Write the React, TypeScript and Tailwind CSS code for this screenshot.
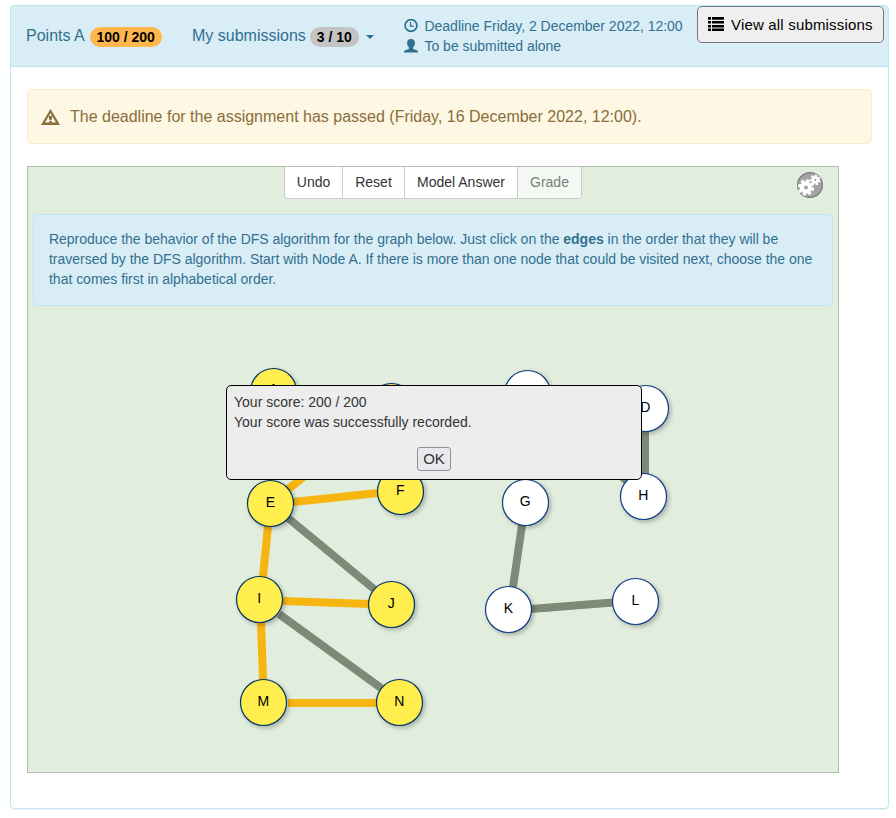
type GraphNode = { id: string; x: number; y: number; visited?: boolean; labelY?: number };

const nodes: GraphNode[] = [
  { id: "A", x: 273.5, y: 391.5, visited: true, labelY: 394 },
  { id: "B", x: 391.5, y: 406.5, visited: true },
  { id: "C", x: 527.5, y: 393.5 },
  { id: "D", x: 645.5, y: 408.5 },
  { id: "E", x: 270.5, y: 503.5, visited: true },
  { id: "F", x: 400.5, y: 491.5, visited: true },
  { id: "G", x: 525.5, y: 502.5 },
  { id: "H", x: 643.5, y: 496.5 },
  { id: "I", x: 259.5, y: 599.5, visited: true },
  { id: "J", x: 391.5, y: 604.5, visited: true },
  { id: "K", x: 508.5, y: 609.5 },
  { id: "L", x: 635.5, y: 601.5 },
  { id: "M", x: 263.5, y: 702.5, visited: true },
  { id: "N", x: 399.5, y: 702.5, visited: true },
];

type Edge = { from: [number, number]; to: [number, number]; visited?: boolean };

const edges: Edge[] = [
  { from: [287, 490], to: [374, 421], visited: true },
  { from: [293, 502], to: [378, 493], visited: true },
  { from: [268, 526], to: [263, 577], visited: true },
  { from: [282, 601], to: [369, 604], visited: true },
  { from: [261, 622], to: [263, 680], visited: true },
  { from: [288, 703], to: [377, 703], visited: true },
  { from: [288, 518], to: [374, 589] },
  { from: [279, 614], to: [381, 688] },
  { from: [522, 525], to: [513, 587] },
  { from: [531, 609], to: [613, 602.5] },
  { from: [645, 431], to: [645, 474] },
  { from: [547, 409], to: [629, 483] },
];

function ClockIcon() {
  return (
    <svg className="h-[14px] w-[14px]" viewBox="0 0 14 14" fill="none" stroke="currentColor">
      <circle cx="7" cy="6.500" r="5.900" strokeWidth="1.700" />
      <path d="M6.500 3v4.100h3.300" strokeWidth="1.200" />
    </svg>
  );
}

function UserIcon() {
  return (
    <svg className="h-[14px] w-[14px]" viewBox="0 0 14 14" fill="currentColor">
      <path d="M7 0C4.500 0 3.100 1.500 3.100 3.900c0 1.900.8 3.600 1.900 4.600v1c-.2.500-1 .8-2.400 1.200C1 11.200 0 11.700 0 12.600V13.500h14v-.9c0-.9-1-1.400-2.600-1.900C10 10.300 9.200 10 9 9.500v-1c1.100-1 1.900-2.700 1.900-4.600C10.900 1.500 9.500 0 7 0z" />
    </svg>
  );
}

function WarningIcon() {
  return (
    <svg className="h-4 w-[19px] shrink-0" viewBox="0 0 19 16">
      <path fill="currentColor" fillRule="evenodd" d="M9.500 0L19 16H0zM9.500 4L4 13.400h11z" />
      <path fill="currentColor" d="M7.500 6.700h4l-1 4.500h-2zM8.300 12h2.400v1.800H8.300z" />
    </svg>
  );
}

function ListIcon() {
  return (
    <svg className="h-[14px] w-4 shrink-0" viewBox="0 0 16 14" fill="currentColor">
      <path d="M0 0h3v2.700H0zM4 0h12v2.700H4zM0 4h3v2.500H0zM4 4h12v2.500H4zM0 8h3v2.500H0zM4 8h12v2.500H4zM0 11.600h3V14H0zM4 11.600h12V14H4z" />
    </svg>
  );
}

function SettingsIcon() {
  return (
    <svg className="h-[26px] w-[26px]" viewBox="0 0 26 26">
      <circle cx="13" cy="13" r="12.400" fill="#a3a3a3" stroke="#7b7b7b" strokeWidth="1.200" />
      <circle cx="9" cy="15.500" r="6.200" fill="#fff" />
      <circle cx="9" cy="15.500" r="6.700" fill="none" stroke="#fff" strokeWidth="3" strokeDasharray="3.200 2.062" />
      <circle cx="9" cy="15.500" r="1.900" fill="#a3a3a3" />
      <circle cx="18.300" cy="7.900" r="3.700" fill="#fff" />
      <circle cx="18.300" cy="7.900" r="4.200" fill="none" stroke="#fff" strokeWidth="2.200" strokeDasharray="2.400 1.370" />
      <circle cx="18.300" cy="7.900" r="1.100" fill="#a3a3a3" />
    </svg>
  );
}

function Graph() {
  return (
    <svg className="absolute inset-0 h-full w-full" viewBox="28 167 810 605">
      {edges.map((e, i) => (
        <line
          key={i}
          x1={e.from[0]}
          y1={e.from[1]}
          x2={e.to[0]}
          y2={e.to[1]}
          strokeWidth="8"
          stroke={e.visited ? "#f7b512" : "#7e8978"}
        />
      ))}
      {nodes.map((n) => (
        <g key={n.id}>
          <circle
            className="drop-shadow-[2px_2px_2px_rgba(0,0,0,0.25)]"
            cx={n.x}
            cy={n.y}
            r="23"
            fill={n.visited ? "#ffee4d" : "#fff"}
            stroke={n.visited ? "#003366" : "#0b3c85"}
            strokeWidth="1.2"
          />
          <text x={n.x - 0.2} y={n.labelY ?? n.y + 3.5} textAnchor="middle" fontSize="14" fill="#000">
            {n.id}
          </text>
        </g>
      ))}
    </svg>
  );
}

export default function App() {
  return (
    <div className="h-[818px] w-[896px] bg-white pl-[10px] pt-[5px] font-['Liberation_Sans',Arial,sans-serif] text-[#31708f]">
      <section className="h-[804px] w-[879px] rounded-[4px] border border-[#bce8f1] shadow-[0_1px_1px_rgba(0,0,0,0.05)]">
        <header className="flex h-[61px] items-start rounded-t-[3px] border-b border-[#bce8f1] bg-[#d9edf7]">
          <div className="flex w-[166px] shrink-0 items-center pl-[15px] pt-[19px] text-base leading-[22px]">
            <span className="whitespace-nowrap">Points A</span>
            <span className="ml-[5px] mt-[2px] flex h-5 w-[72px] items-center justify-center rounded-full bg-[#ffb74d] text-sm font-bold text-black">
              100 / 200
            </span>
          </div>
          <div className="flex w-[216px] shrink-0 items-center pl-[15px] pt-[19px] text-base leading-[22px]">
            <span className="whitespace-nowrap">My submissions</span>
            <span className="ml-1 mt-[2px] flex h-5 w-[49px] items-center justify-center rounded-full bg-[#c4c4c4] text-sm font-bold text-black">
              3 / 10
            </span>
            <span className="ml-[7px] mt-[2px] border-x-4 border-t-4 border-x-transparent border-t-[#31708f]" />
          </div>
          <div className="w-[304px] shrink-0 pl-[11px] pt-[10px] text-sm leading-5 tracking-[-0.02px]">
            <div className="flex items-center gap-[6.5px] whitespace-nowrap">
              <ClockIcon />
              Deadline Friday, 2 December 2022, 12:00
            </div>
            <div className="flex items-center gap-[6.5px] whitespace-nowrap">
              <UserIcon />
              To be submitted alone
            </div>
          </div>
          <button className="flex h-[37px] w-[187px] shrink-0 items-center gap-[7px] whitespace-nowrap rounded-[5px] border border-[#76767a] bg-[#efefef] pb-px pl-[10px] text-[15px] tracking-[0.18px] text-black">
            <ListIcon />
            <span className="pt-[3px]">View all submissions</span>
          </button>
        </header>

        <div className="pl-4 pt-[22px]">
          <div className="flex h-[55px] w-[845px] items-center gap-[10px] whitespace-nowrap rounded-[4px] border border-[#faebcc] bg-[#fdf7e3] pl-[13px] text-base text-[#8a6d3b]">
            <WarningIcon />
            The deadline for the assignment has passed (Friday, 16 December 2022, 12:00).
          </div>

          <main className="relative mt-[22px] h-[607px] w-[812px] border border-[#b1bfae] bg-[#e1eddd]">
            <Graph />
            <div className="relative flex h-[47px] justify-center">
              <div className="flex h-8 overflow-hidden rounded-b-[4px] border border-t-0 border-[#ccc] bg-white text-sm leading-5 text-[#333]">
                <button className="w-[57px] pb-px">Undo</button>
                <button className="w-[62px] border-l border-[#ccc] pb-px">Reset</button>
                <button className="w-[113px] border-l border-[#ccc] pb-px">Model Answer</button>
                <button className="w-[64px] border-l border-[#ccc] bg-[#f4f9f3] pb-px text-[#77807a]">Grade</button>
              </div>
              <button className="absolute right-[15px] top-[5px]">
                <SettingsIcon />
              </button>
            </div>
            <div className="relative mx-[5px] h-[92px] whitespace-nowrap rounded-[4px] border border-[#bce8f1] bg-[#d9edf7] px-[15px] pt-[14px] text-sm leading-5 tracking-[-0.02px]">
              Reproduce the behavior of the DFS algorithm for the graph below. Just click on the <b>edges</b> in the order that they will be
              <br />
              traversed by the DFS algorithm. Start with Node A. If there is more than one node that could be visited next, choose the one
              <br />
              that comes first in alphabetical order.
            </div>

            <div
              role="dialog"
              className="absolute left-[198px] top-[218px] flex h-[95px] w-[416px] flex-col rounded-[5px] border border-black bg-[#ededed] px-[7px] pt-[6px] text-sm leading-5 text-[#333]"
            >
              <p>Your score: 200 / 200</p>
              <p>Your score was successfully recorded.</p>
              <button className="mt-[15px] flex h-6 w-[34px] items-center justify-center self-center rounded-[3px] border border-[#8f8f9d] bg-[#e9e9ed] text-[15px]">
                OK
              </button>
            </div>
          </main>
        </div>
      </section>
    </div>
  );
}
